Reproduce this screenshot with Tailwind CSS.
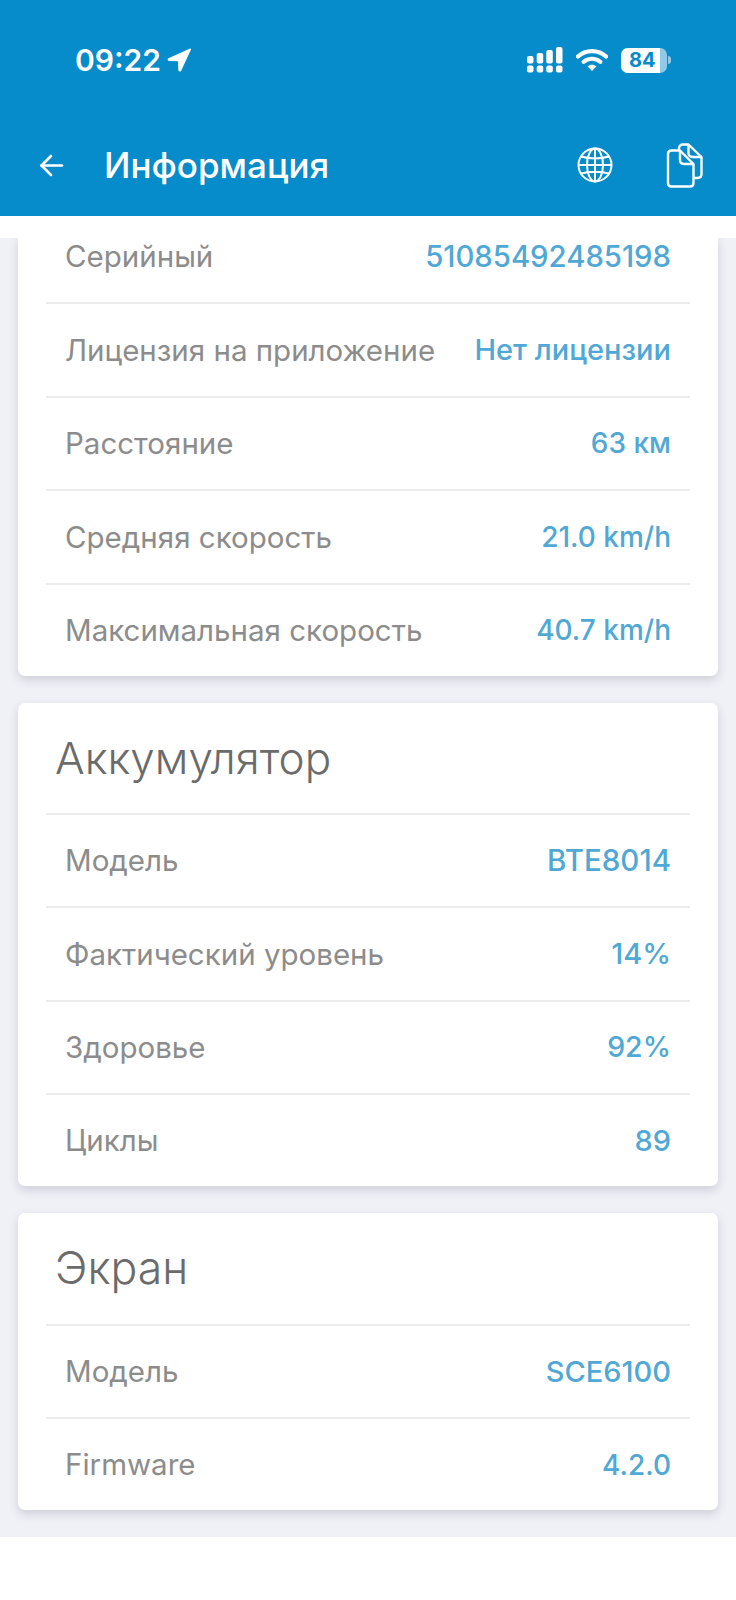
<!DOCTYPE html>
<html lang="ru">
<head>
    <meta charset="UTF-8" />
    <meta name="viewport" content="width=device-width, initial-scale=1.0" />
    <title>Информация</title>
    <script src="https://cdn.jsdelivr.net/npm/@tailwindcss/browser@4"></script>
</head>
<body class="bg-white font-['Inter',sans-serif] w-[736px] h-[1600px] overflow-hidden">
    <header class="bg-[#068bcb] h-[216px] text-white">
        <!-- status bar -->
        <div class="h-[120px] flex items-center justify-between pl-[75px] pr-[65px]">
            <div class="flex items-center gap-[6px]">
                <span class="font-semibold text-[30px] leading-none">09:22</span>
                <svg width="24" height="24" viewBox="0 0 24 24" class="fill-white"><path d="M23 .6 1.500 10.200c-1.500.7-1 2.800.6 2.800l8.900.2.300 8.900c.1 1.600 2.200 2 2.900.6L24 1.600c.2-.7-.4-1.300-1-1z"/></svg>
            </div>
            <div class="flex items-center">
                <svg width="36" height="26" viewBox="0 0 36 26" class="fill-white">
                    <rect x="0" y="18.500" width="6.500" height="7" rx="2"/>
                    <rect x="9.700" y="18.500" width="6.500" height="7" rx="2"/>
                    <rect x="19.300" y="18.500" width="6.500" height="7" rx="2"/>
                    <rect x="29" y="18.500" width="6.500" height="7" rx="2"/>
                    <rect x="0" y="9" width="6.500" height="7.500" rx="2"/>
                    <rect x="9.700" y="6" width="6.500" height="10.500" rx="2"/>
                    <rect x="19.300" y="3" width="6.500" height="13.500" rx="2"/>
                    <rect x="29" y="0" width="6.500" height="16.500" rx="2"/>
                </svg>
                <svg width="32" height="24" viewBox="0 0 32 24" class="ml-[13px] fill-none stroke-white">
                    <path d="M2 8.500C9.500 1.200 22.500 1.200 30 8.500" stroke-width="4.200" stroke-linecap="round"/>
                    <path d="M7.500 14C12.200 9.800 19.800 9.800 24.500 14" stroke-width="4" stroke-linecap="round"/>
                    <path d="M11.500 18.200 16 23l4.500-4.800c-2.500-2.100-6.500-2.100-9 0z" class="fill-white stroke-none"/>
                </svg>
                <div class="ml-[13px] flex items-center">
                    <div class="relative w-[46px] h-[25px] rounded-[7px] overflow-hidden bg-white/55">
                        <div class="absolute inset-y-0 left-0 w-[39px] bg-white"></div>
                        <span class="absolute inset-0 flex items-center pl-[8px] font-bold text-[20px] leading-none text-[#068bcb]">84</span>
                    </div>
                    <div class="ml-[1px] w-[3px] h-[8px] rounded-r-full bg-white/55"></div>
                </div>
            </div>
        </div>
        <!-- toolbar -->
        <div class="h-[96px] pb-[6px] flex items-center pl-[39px] pr-[33px]">
            <svg width="25" height="25" viewBox="0 0 25 25" class="fill-none stroke-white" stroke-width="2.600" stroke-linecap="round" stroke-linejoin="round">
                <path d="M23 12.500H2.500"/><path d="M12 3 2.500 12.500 12 22"/>
            </svg>
            <h1 class="ml-[40px] text-[35px] leading-none font-medium">Информация</h1>
            <div class="ml-auto flex items-center gap-[53px]">
                <svg width="36" height="36" viewBox="0 0 36 36" class="fill-none stroke-white" stroke-width="2">
                    <circle cx="18" cy="18" r="16.500"/>
                    <ellipse cx="18" cy="18" rx="8" ry="16.500"/>
                    <path d="M18 1.500v33M1.500 18h33M4 9.500c8 2.500 20 2.500 28 0M4 26.500c8-2.500 20-2.500 28 0"/>
                </svg>
                <svg width="37" height="45" viewBox="0 0 37 45" class="fill-none stroke-white" stroke-width="2.400" stroke-linejoin="round">
                    <path d="M13 7V5.500C13 3 14.500 1.500 17 1.500h5.500L35.500 14v17c0 2.500-1.500 4-4 4H28"/>
                    <path d="M22.500 1.500V10c0 2.500 1.500 4 4 4h9"/>
                    <path d="M5.500 7.500H14L27.500 21v19c0 2-1.500 3.500-3.500 3.500H5.500c-2 0-3.500-1.500-3.500-3.500V11c0-2 1.500-3.500 3.500-3.500z"/>
                    <path d="M14 7.500V17c0 2.500 1.500 4 4 4h9.500"/>
                </svg>
            </div>
        </div>
    </header>

    <main class="mt-[22px] h-[1299px] overflow-hidden bg-[#f0f0f7] px-[18px] flex flex-col gap-[27px] text-[29.500px]">
        <section class="bg-white rounded-b-[7px] px-[28px] shadow-[0_4px_10px_rgba(60,60,90,0.18)] shrink-0">
            <div class="h-[64px] pb-[27px] px-[19px] flex items-center justify-between"><span class="text-[#8c8c8c]">Серийный</span><span class="text-[29.300px] text-[#4fa8d5] font-medium">51085492485198</span></div>
            <div class="h-[93.500px] border-t-2 border-[#ececec] px-[19px] flex items-center justify-between"><span class="text-[#8c8c8c]">Лицензия на приложение</span><span class="text-[29px] text-[#4fa8d5] font-medium">Нет лицензии</span></div>
            <div class="h-[93.500px] border-t-2 border-[#ececec] px-[19px] flex items-center justify-between"><span class="text-[#8c8c8c]">Расстояние</span><span class="text-[28px] text-[#4fa8d5] font-medium">63 км</span></div>
            <div class="h-[93.500px] border-t-2 border-[#ececec] px-[19px] flex items-center justify-between"><span class="text-[#8c8c8c]">Средняя скорость</span><span class="text-[28px] text-[#4fa8d5] font-medium">21.0 km/h</span></div>
            <div class="h-[93px] border-t-2 border-[#ececec] px-[19px] flex items-center justify-between"><span class="text-[#8c8c8c]">Максимальная скорость</span><span class="text-[28px] text-[#4fa8d5] font-medium">40.7 km/h</span></div>
        </section>

        <section class="bg-white rounded-[7px] px-[28px] shadow-[0_4px_10px_rgba(60,60,90,0.18)] shrink-0">
            <h2 class="h-[110px] pl-[9px] flex items-center text-[44px] font-light text-[#6b6b6b]">Аккумулятор</h2>
            <div class="h-[93.500px] border-t-2 border-[#ececec] px-[19px] flex items-center justify-between"><span class="text-[#8c8c8c]">Модель</span><span class="text-[29.500px] text-[#4fa8d5] font-medium">BTE8014</span></div>
            <div class="h-[93.500px] border-t-2 border-[#ececec] px-[19px] flex items-center justify-between"><span class="text-[#8c8c8c]">Фактический уровень</span><span class="text-[29px] text-[#4fa8d5] font-medium">14%</span></div>
            <div class="h-[93.500px] border-t-2 border-[#ececec] px-[19px] flex items-center justify-between"><span class="text-[#8c8c8c]">Здоровье</span><span class="text-[28.500px] text-[#4fa8d5] font-medium">92%</span></div>
            <div class="h-[93px] border-t-2 border-[#ececec] px-[19px] flex items-center justify-between"><span class="text-[#8c8c8c]">Циклы</span><span class="text-[29px] text-[#4fa8d5] font-medium">89</span></div>
        </section>

        <section class="bg-white rounded-[7px] px-[28px] shadow-[0_4px_10px_rgba(60,60,90,0.18)] shrink-0">
            <h2 class="h-[111px] pl-[9px] flex items-center text-[44.500px] font-light text-[#6b6b6b]">Экран</h2>
            <div class="h-[93px] border-t-2 border-[#ececec] px-[19px] flex items-center justify-between"><span class="text-[#8c8c8c]">Модель</span><span class="text-[29px] text-[#4fa8d5] font-medium">SCE6100</span></div>
            <div class="h-[93px] border-t-2 border-[#ececec] px-[19px] flex items-center justify-between"><span class="text-[#8c8c8c]">Firmware</span><span class="text-[28px] text-[#4fa8d5] font-medium">4.2.0</span></div>
        </section>
    </main>
</body>
</html>
